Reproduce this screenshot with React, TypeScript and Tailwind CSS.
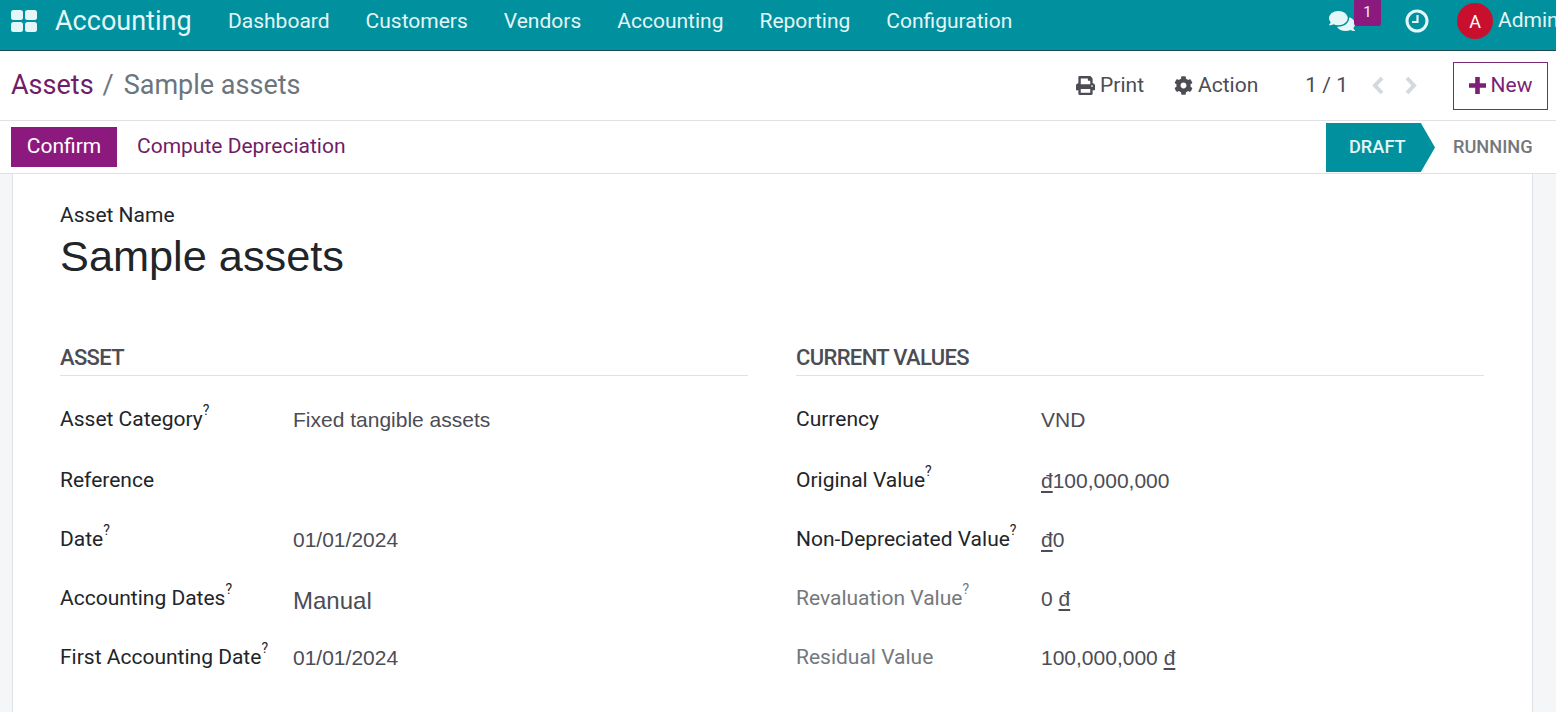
import { FaCog, FaComments, FaPrint } from 'react-icons/fa';

const navItems = ['Dashboard', 'Customers', 'Vendors', 'Accounting', 'Reporting', 'Configuration'];

type Row = { label: string; value: React.ReactNode; help?: boolean; muted?: boolean; big?: boolean; h: string };

const Dong = () => <span className="underline underline-offset-[3px]">đ</span>;

const assetRows: Row[] = [
  { label: 'Asset Category', value: 'Fixed tangible assets', help: true, h: 'h-[62px]' },
  { label: 'Reference', value: '', h: 'h-[59px]' },
  { label: 'Date', value: '01/01/2024', help: true, h: 'h-[59px]' },
  { label: 'Accounting Dates', value: 'Manual', help: true, big: true, h: 'h-[59px]' },
  { label: 'First Accounting Date', value: '01/01/2024', help: true, h: 'h-[59px]' },
];

const valueRows: Row[] = [
  { label: 'Currency', value: 'VND', h: 'h-[62px]' },
  { label: 'Original Value', value: <><Dong />100,000,000</>, help: true, h: 'h-[59px]' },
  { label: 'Non-Depreciated Value', value: <><Dong />0</>, help: true, h: 'h-[59px]' },
  { label: 'Revaluation Value', value: <>0 <Dong /></>, help: true, muted: true, h: 'h-[59px]' },
  { label: 'Residual Value', value: <>100,000,000 <Dong /></>, muted: true, h: 'h-[59px]' },
];

function FieldGroup({ title, rows, labelWidth }: { title: string; rows: Row[]; labelWidth: string }) {
  return (
    <div className="w-[688px]">
      <h2 className="h-[33px] border-b border-[#dee2e6] text-[22px] leading-[29px] font-medium tracking-[-0.65px] text-[#4c4c55]">{title}</h2>
      <div className="pt-[13px]">
        {rows.map((r) => (
          <div key={r.label} className={`flex items-center ${r.h}`}>
            <div className={`${labelWidth} shrink-0 text-[21px] ${r.muted ? 'text-[#74787c]' : 'text-[#212529]'}`}>
              {r.label}
              {r.help && <sup className="relative -top-[11px] text-[14px] leading-none">?</sup>}
            </div>
            <div className={`${r.big ? 'pt-[4px] text-[24px]' : 'text-[21px]'} font-['Liberation_Sans',Arial,sans-serif] text-[#4c4c55]`}>{r.value}</div>
          </div>
        ))}
      </div>
    </div>
  );
}

export default function App() {
  return (
    <div className="h-[712px] w-[1556px] overflow-hidden bg-[#f4f6f8] font-['Roboto',sans-serif]">
      {/* Top navbar */}
      <header className="flex h-[51px] items-center border-b border-[#1f4a50] bg-[#00909e] pb-[8px] pl-[11px] text-[#e4f6f7]">
        <svg width="26" height="22" viewBox="0 0 26 22" className="shrink-0 fill-[#e4f6f7]">
          <rect x="0" y="0" width="12" height="10" rx="2.5" />
          <rect x="14" y="0" width="12" height="10" rx="2.5" />
          <rect x="0" y="12" width="12" height="10" rx="2.5" />
          <rect x="14" y="12" width="12" height="10" rx="2.5" />
        </svg>
        <span className="ml-[18px] w-[173px] shrink-0 text-[27px]">Accounting</span>
        <nav className="flex gap-[36px] pt-[1px] text-[21px]">
          {navItems.map((n) => (
            <span key={n}>{n}</span>
          ))}
        </nav>
        <div className="ml-auto flex h-full w-[227px] shrink-0 items-center">
          <div className="relative h-full w-[76px] shrink-0">
            <FaComments className="absolute top-[8px] left-0 text-[26px]" />
            <span className="absolute -top-[1px] left-[25px] flex h-[27px] w-[27px] items-center justify-center rounded-[3px] bg-[#8c1a7e] text-[15px]">1</span>
          </div>
          <svg width="24" height="24" viewBox="0 0 24 24" fill="none" stroke="currentColor" className="shrink-0">
            <circle cx="12" cy="12" r="10" strokeWidth="3" />
            <path d="M12.5 6v7H7" strokeWidth="2.2" />
          </svg>
          <div className="ml-[28px] flex h-[36px] w-[36px] shrink-0 items-center justify-center rounded-full bg-[#c8102e] text-[18px] text-white">A</div>
          <span className="ml-[5px] text-[21px] whitespace-nowrap">Admin</span>
        </div>
      </header>

      {/* Breadcrumb + actions */}
      <div className="flex h-[70px] items-center border-b border-[#dee2e6] bg-white pl-[11px] text-[#4c4c55]">
        <div className="text-[27px]">
          <span className="text-[#6f1d66]">Assets</span>
          <span className="mr-[10px] ml-[9px] text-[#6c757d]">/</span>
          <span className="text-[#6c757d]">Sample assets</span>
        </div>
        <div className="ml-auto flex items-center text-[21px]">
          <span className="flex items-center gap-[5px]"><FaPrint className="text-[19px]" />Print</span>
          <span className="ml-[30px] flex items-center gap-[5px]"><FaCog className="text-[19px]" />Action</span>
          <span className="ml-[47px]">1 / 1</span>
          <svg width="15" height="19" viewBox="0 0 15 19" fill="none" stroke="#d5d8dc" strokeWidth="4" className="ml-[22px] shrink-0">
            <path d="M12 2 5 9.5 12 17" />
          </svg>
          <svg width="15" height="19" viewBox="0 0 15 19" fill="none" stroke="#d5d8dc" strokeWidth="4" className="ml-[19px] shrink-0">
            <path d="M3 2l7 7.5L3 17" />
          </svg>
          <button className="mr-[8px] ml-[34px] flex h-[48px] w-[95px] items-center justify-center gap-[5px] border border-[#7c2a78] text-[#7c1f76]">
            <svg width="17" height="17" viewBox="0 0 17 17" className="shrink-0 fill-current">
              <path d="M6.2 0h4.6v6.2H17v4.6h-6.2V17H6.2v-6.2H0V6.2h6.2z" />
            </svg>
            New
          </button>
        </div>
      </div>

      {/* Buttons + statusbar */}
      <div className="flex h-[53px] items-center border-b border-[#dee2e6] bg-white pl-[11px] text-[21px]">
        <button className="flex h-[40px] w-[106px] items-center justify-center bg-[#8c1a7e] text-white">Confirm</button>
        <button className="ml-[20px] text-[#6f1d66]">Compute Depreciation</button>
        <div className="ml-auto flex h-full items-start">
          <div className="mt-[2px] flex h-[49px] w-[109px] items-center bg-[#00909e] pb-[2px] pl-[23px] text-[18.2px] font-medium text-[#e4f6f7] [clip-path:polygon(0_0,87%_0,100%_50%,87%_100%,0_100%)]">DRAFT</div>
          <div className="mt-[2px] flex h-[49px] w-[121px] items-center pb-[2px] pl-[18px] text-[18.2px] font-medium text-[#74787c]">RUNNING</div>
        </div>
      </div>

      {/* Form sheet */}
      <main className="mr-[23px] ml-[12px] h-full border-x border-[#dee2e6] bg-white px-[47px] pt-[28px]">
        <div className="text-[21px] leading-[26px] text-[#212529]">Asset Name</div>
        <h1 className="font-['Liberation_Sans',Arial,sans-serif] text-[43.3px] leading-[56px] text-[#212529]">Sample assets</h1>
        <div className="mt-[59px] flex gap-[48px]">
          <FieldGroup title="ASSET" rows={assetRows} labelWidth="w-[233px]" />
          <FieldGroup title="CURRENT VALUES" rows={valueRows} labelWidth="w-[245px]" />
        </div>
      </main>
    </div>
  );
}
